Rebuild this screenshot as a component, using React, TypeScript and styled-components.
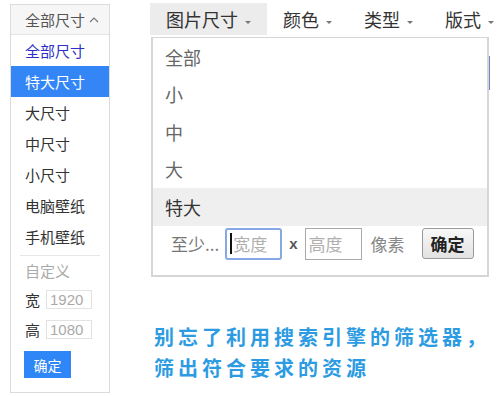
import React from 'react'
import styled, { createGlobalStyle } from 'styled-components'

const GlobalStyle = createGlobalStyle`
  html, body {
    margin: 0;
    padding: 0;
    background: #fff;
  }
  body {
    font-family: "Noto Sans CJK SC", "Noto Sans", sans-serif;
  }
`

const Page = styled.div`
  display: flex;
  align-items: flex-start;
  width: 497px;
  height: 397px;
  overflow: hidden;
  background: #fff;
`

const SizePanel = styled.div`
  margin: 4px 0 0 10px;
  width: 100px;
  height: 389px;
  box-sizing: border-box;
  border: 1px solid #dcdcdc;
  display: flex;
  flex-direction: column;
`

const PanelHeader = styled.div`
  height: 29px;
  display: flex;
  align-items: center;
  padding-left: 14px;
  gap: 4px;
  background: #f6f6f6;
  border-bottom: 1px solid #e4e4e4;
  font-size: 15px;
  color: #555;
`

const OptionList = styled.ul`
  list-style: none;
  margin: 0;
  padding: 0;
`

const Option = styled.li<{ $active?: boolean; $current?: boolean }>`
  height: 31px;
  display: flex;
  align-items: center;
  padding-left: 14px;
  font-size: 15px;
  color: ${({ $active, $current }) => ($active ? '#fff' : $current ? '#2f2fc6' : '#333')};
  background: ${({ $active }) => ($active ? '#3486f7' : 'transparent')};
`

const Divider = styled.div`
  margin: 3px 9px 0;
  border-top: 1px solid #e6e6e6;
`

const CustomLabel = styled.div`
  height: 28px;
  display: flex;
  align-items: center;
  padding-left: 14px;
  font-size: 15px;
  color: #aaa;
`

const SizeField = styled.div`
  height: 30px;
  display: flex;
  align-items: center;
  gap: 6px;
  padding-left: 14px;
  font-size: 15px;
  color: #333;
`

const SizeInput = styled.div`
  width: 46px;
  height: 19px;
  box-sizing: border-box;
  border: 1px solid #e2e2e2;
  display: flex;
  align-items: center;
  padding-left: 3px;
  font-family: "Liberation Sans", Arial, sans-serif;
  font-size: 15px;
  color: #aaa;
`

const ConfirmButton = styled.button`
  margin: 7px 0 0 13px;
  width: 47px;
  height: 27px;
  border: none;
  padding: 0;
  background: #2f86f6;
  color: #fff;
  font-family: inherit;
  font-size: 14px;
`

const RightColumn = styled.div`
  margin: 3px 0 0 40px;
  width: 338px;
  display: flex;
  flex-direction: column;
`

const TabBar = styled.div`
  display: flex;
  height: 32px;
`

const Tab = styled.div<{ $active?: boolean }>`
  display: flex;
  align-items: center;
  padding: 0 16px;
  font-size: 18px;
  color: #333;
  background: ${({ $active }) => ($active ? '#ececec' : 'transparent')};
  white-space: nowrap;
`

const Caret = styled.span`
  margin: 6px 0 0 7px;
  width: 0;
  height: 0;
  border-left: 3px solid transparent;
  border-right: 3px solid transparent;
  border-top: 3px solid #777;
`

const Dropdown = styled.div`
  position: relative;
  margin: 2px 0 0 1px;
  width: 338px;
  height: 240px;
  box-sizing: border-box;
  border: 2px solid #d6d6d6;
  border-top-width: 1px;
`

const EdgeMark = styled.div`
  position: absolute;
  right: -3px;
  top: 18px;
  width: 1px;
  height: 34px;
  background: #6f86c4;
`

const DropItem = styled.div<{ $active?: boolean }>`
  height: 37.5px;
  display: flex;
  align-items: center;
  padding-left: 12px;
  font-size: 18px;
  color: ${({ $active }) => ($active ? '#333' : '#666')};
  background: ${({ $active }) => ($active ? '#efefef' : 'transparent')};
`

const MinRow = styled.div`
  display: flex;
  align-items: center;
  height: 32px;
  margin-top: 2px;
  padding-left: 18px;
  font-size: 17px;
  color: #777;
`

const MinLabel = styled.span`
  margin-right: 6px;
`

const PixelInput = styled.div<{ $focused?: boolean }>`
  width: 57px;
  height: 32px;
  box-sizing: border-box;
  border: ${({ $focused }) => ($focused ? '2px solid #86a8e6' : '1px solid #a9a9a9')};
  border-radius: ${({ $focused }) => ($focused ? '3px' : '0')};
  display: flex;
  align-items: center;
  padding-left: 3px;
  font-size: 17px;
  color: #b0b0b0;
`

const TextCursor = styled.span`
  width: 2px;
  height: 21px;
  background: #111;
  margin-right: 1px;
`

const Times = styled.span`
  margin: 0 7px;
  font-family: "Liberation Sans", Arial, sans-serif;
  font-weight: bold;
  font-size: 15px;
  color: #555;
`

const Unit = styled.span`
  margin-left: 9px;
  color: #888;
`

const MinButton = styled.button`
  margin-left: 17px;
  width: 52px;
  height: 31px;
  box-sizing: border-box;
  border: 1px solid #9a9a9a;
  border-radius: 3px;
  background: linear-gradient(#f8f8f8, #e2e2e2);
  font-family: inherit;
  font-size: 17px;
  font-weight: bold;
  color: #222;
  padding: 0;
`

const Caption = styled.div`
  margin: 44px 0 0 4px;
  font-size: 20px;
  line-height: 31px;
  font-weight: bold;
  letter-spacing: 4px;
  color: #2c9be2;
  white-space: nowrap;
`

const ChevronUp = () => (
  <svg width="10" height="7" viewBox="0 0 10 7">
    <polyline points="1,6 5,2 9,6" fill="none" stroke="#777" strokeWidth="1.1" />
  </svg>
)

const sizeOptions = ['全部尺寸', '特大尺寸', '大尺寸', '中尺寸', '小尺寸', '电脑壁纸', '手机壁纸']
const tabs = ['图片尺寸', '颜色', '类型', '版式']
const dropItems = ['全部', '小', '中', '大', '特大']

export default function App() {
  return (
    <Page>
      <GlobalStyle />
      <SizePanel>
        <PanelHeader>
          全部尺寸
          <ChevronUp />
        </PanelHeader>
        <OptionList>
          {sizeOptions.map((label, i) => (
            <Option key={label} $current={i === 0} $active={i === 1}>
              {label}
            </Option>
          ))}
        </OptionList>
        <Divider />
        <CustomLabel>自定义</CustomLabel>
        <SizeField>
          宽<SizeInput>1920</SizeInput>
        </SizeField>
        <SizeField>
          高<SizeInput>1080</SizeInput>
        </SizeField>
        <ConfirmButton>确定</ConfirmButton>
      </SizePanel>

      <RightColumn>
        <TabBar>
          {tabs.map((label, i) => (
            <Tab key={label} $active={i === 0}>
              {label}
              <Caret />
            </Tab>
          ))}
        </TabBar>
        <Dropdown>
          <EdgeMark />
          {dropItems.map((label) => (
            <DropItem key={label} $active={label === '特大'}>
              {label}
            </DropItem>
          ))}
          <MinRow>
            <MinLabel>至少...</MinLabel>
            <PixelInput $focused>
              <TextCursor />
              宽度
            </PixelInput>
            <Times>x</Times>
            <PixelInput>高度</PixelInput>
            <Unit>像素</Unit>
            <MinButton>确定</MinButton>
          </MinRow>
        </Dropdown>
        <Caption>
          别忘了利用搜索引擎的筛选器，
          <br />
          筛出符合要求的资源
        </Caption>
      </RightColumn>
    </Page>
  )
}
